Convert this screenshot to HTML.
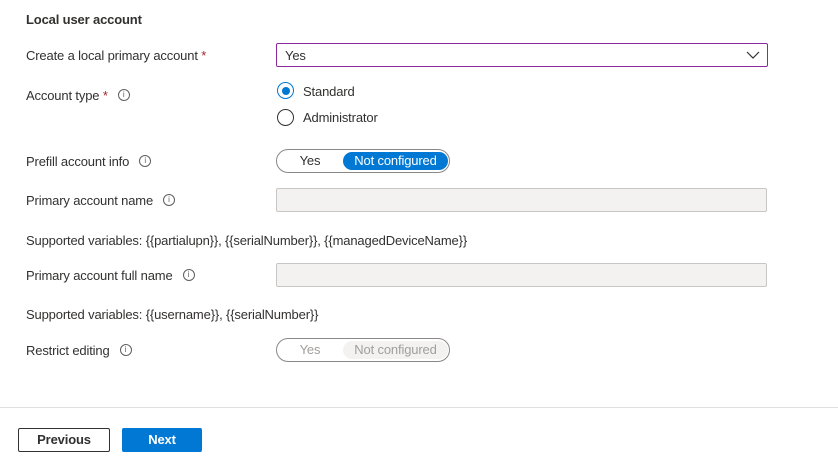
<!DOCTYPE html>
<html><head><style>
*{box-sizing:border-box;margin:0;padding:0}
body{width:838px;height:467px;background:#fff;font-family:"Liberation Sans",sans-serif;font-size:13px;letter-spacing:-0.15px;color:#323130;position:relative;overflow:hidden}
.a{position:absolute;white-space:nowrap}
.req{color:#a4262c}
.i{display:inline-block;position:relative;top:-3px;width:12px;height:12px;border:1px solid #605e5c;border-radius:50%;font-size:8px;line-height:10px;text-align:center;color:#605e5c;vertical-align:0px;margin-left:10px;letter-spacing:0}
.inp{position:absolute;left:276px;width:491px;height:24px;border:1px solid #c8c6c4;background:#f3f2f1;border-radius:2px}
.tg{position:absolute;left:276px;width:174px;height:24px;border:1px solid #8a8886;border-radius:12px}
.tg .y{position:absolute;left:0;width:66px;top:3px;text-align:center}
.tg .n{position:absolute;left:66px;top:2px;width:105px;height:18px;border-radius:9px;text-align:center;line-height:18px}
.rad{position:absolute;left:277px;width:17px;height:17px;border:1px solid #323130;border-radius:50%}
</style></head><body>
<div class="a" style="left:26px;top:12px;font-weight:bold">Local user account</div>
<div class="a" style="left:26px;top:48px">Create a local primary account <span class="req">*</span></div>
<div class="a" style="left:276px;top:43px;width:492px;height:24px;border:1px solid #8b2a9e;border-radius:2px;padding:4px 8px">Yes
<svg style="position:absolute;right:7px;top:6px" width="14" height="10" viewBox="0 0 14 10"><path d="M1 2l6 6 6-6" fill="none" stroke="#323130" stroke-width="1.2"/></svg></div>
<div class="a" style="left:26px;top:88px">Account type <span class="req">*</span><span class="i">i</span></div>
<div class="rad" style="top:82px;border-color:#0078d4"><div style="position:absolute;left:3.5px;top:3.5px;width:8px;height:8px;border-radius:50%;background:#0078d4"></div></div>
<div class="a" style="left:303px;top:84px">Standard</div>
<div class="rad" style="top:109px"></div>
<div class="a" style="left:303px;top:110px">Administrator</div>
<div class="a" style="left:26px;top:154px">Prefill account info<span class="i">i</span></div>
<div class="tg" style="top:149px"><span class="y">Yes</span><span class="n" style="background:#0078d4;color:#fff">Not configured</span></div>
<div class="a" style="left:26px;top:193px">Primary account name<span class="i">i</span></div>
<div class="inp" style="top:188px"></div>
<div class="a" style="left:26px;top:233px">Supported variables: {{partialupn}}, {{serialNumber}}, {{managedDeviceName}}</div>
<div class="a" style="left:26px;top:268px">Primary account full name<span class="i">i</span></div>
<div class="inp" style="top:263px"></div>
<div class="a" style="left:26px;top:307px">Supported variables: {{username}}, {{serialNumber}}</div>
<div class="a" style="left:26px;top:343px">Restrict editing<span class="i">i</span></div>
<div class="tg" style="top:338px"><span class="y" style="color:#a19f9d">Yes</span><span class="n" style="background:#f3f2f1;color:#a19f9d">Not configured</span></div>
<div class="a" style="left:0;top:407px;width:838px;height:1px;background:#e1dfdd"></div>
<div class="a" style="left:18px;top:428px;width:92px;height:24px;border:1px solid #323130;border-radius:2px;text-align:center;line-height:22px;font-weight:bold">Previous</div>
<div class="a" style="left:122px;top:428px;width:80px;height:24px;background:#0078d4;color:#fff;border-radius:2px;text-align:center;line-height:23px;font-weight:bold">Next</div>
</body></html>
